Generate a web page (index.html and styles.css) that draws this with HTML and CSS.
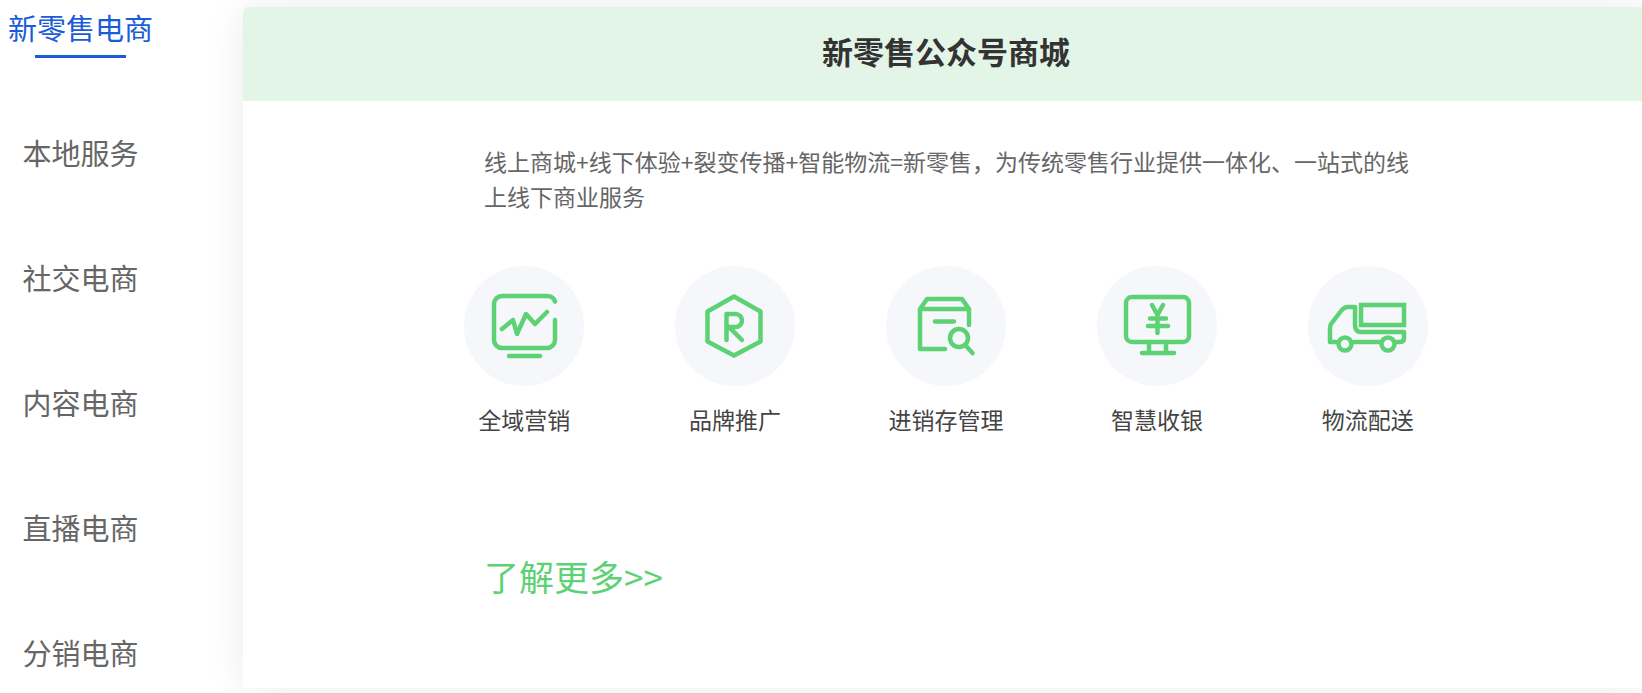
FILE: index.html
```html
<!doctype html>
<html lang="zh-CN">
<head>
<meta charset="utf-8">
<title>新零售电商</title>
  <link rel="stylesheet" href="styles.css">
</head>
<body>
  <div class="solution">
    <nav class="side-nav">
      <a class="side-link active" href="#">新零售电商</a>
      <a class="side-link" href="#">本地服务</a>
      <a class="side-link" href="#">社交电商</a>
      <a class="side-link" href="#">内容电商</a>
      <a class="side-link" href="#">直播电商</a>
      <a class="side-link" href="#">分销电商</a>
    </nav>
    <main class="panel">
      <h2 class="panel-title">新零售公众号商城</h2>
      <p class="desc">线上商城+线下体验+裂变传播+智能物流=新零售，为传统零售行业提供一体化、一站式的线上线下商业服务</p>
      <ul class="features">
        <li>
          <span class="icon">
            <svg viewBox="0 0 120 120">
              <path d="M91 35.500A8 8 0 0 0 83 30H38a8 8 0 0 0-8 8v36a8 8 0 0 0 8 8h45a8 8 0 0 0 8-8V54"/>
              <path d="M38 63l11-9 4 14 9-20 9 10 12-12M45 90h31"/>
            </svg>
          </span>
          <span>全域营销</span>
        </li>
        <li>
          <span class="icon">
            <svg viewBox="0 0 120 120">
              <path d="M59 30.500l26.500 15v30l-26.500 14-26.500-14v-30z"/>
              <path d="M51.500 74V48h9a6.500 6.500 0 0 1 0 13h-9M54 61l13 13"/>
            </svg>
          </span>
          <span>品牌推广</span>
        </li>
        <li>
          <span class="icon">
            <svg viewBox="0 0 120 120">
              <path d="M59 83H34V43l7-10h35l7 10v16M34 43h49M49 55.500h19"/>
              <circle cx="73" cy="72" r="9"/>
              <path d="M79.500 79.500l7 7.500"/>
            </svg>
          </span>
          <span>进销存管理</span>
        </li>
        <li>
          <span class="icon">
            <svg viewBox="0 0 120 120">
              <rect x="29" y="31" width="63" height="45" rx="6"/>
              <path d="M55 39l5.500 10L66 39M60.500 49v18M53 52.500h16M51 60h20M52 76v11M69 76v11M45 87h32"/>
            </svg>
          </span>
          <span>智慧收银</span>
        </li>
        <li>
          <span class="icon">
            <svg viewBox="0 0 120 120">
              <path class="sharp" d="M53 39h43v20H53z"/>
              <path d="M28 76h-6V62q0-2 1-4l10-13q3-4 7-4h7v18q0 7 6 7h43v6q0 4-4 4h-4M46 76h26"/>
              <circle cx="37" cy="78" r="6.500"/>
              <circle cx="80" cy="78" r="6.500"/>
            </svg>
          </span>
          <span>物流配送</span>
        </li>
      </ul>
      <a class="more" href="#">了解更多&gt;&gt;</a>
    </main>
  </div>
</body>
</html>
```

FILE: styles.css
```css
* {
  box-sizing: border-box;
}
body {
  margin: 0;
  min-height: 100vh;
  overflow: hidden;
  font-family: 'Noto Sans CJK SC', sans-serif;
  background: #fff;
}
a {
  text-decoration: none;
}
.solution {
  display: flex;
  align-items: flex-start;
  margin-right: -7px;
  padding-bottom: 5px;
}

/* 左侧菜单 */
.side-nav {
  display: flex;
  flex-direction: column;
  gap: 65px;
  width: 161px;
  margin-right: 82px;
}
.side-link {
  display: flex;
  flex-direction: column;
  align-items: center;
  height: 60px;
  font-size: 29px;
  line-height: 55px;
  color: #666;
  white-space: nowrap;
}
.side-link.active {
  color: #1a5cd8;
}
.side-link.active::after {
  content: '';
  width: 91px;
  height: 3px;
  background: #1a5cd8;
}

/* 右侧内容 */
.panel {
  flex: 1;
  margin-top: 7px;
  padding-bottom: 87px;
  border-radius: 5px 5px 0 0;
  background: #fff;
  box-shadow: 0 0 40px rgba(0, 0, 0, .08);
}
.panel-title {
  margin: 0;
  padding-bottom: 6px;
  border-radius: 5px 5px 0 0;
  font-size: 31px;
  line-height: 88px;
  text-align: center;
  color: #333;
  background: #e3f5e6;
}
.desc {
  width: 66%;
  margin: 43px auto 52px;
  padding-left: 2px;
  font-size: 23px;
  line-height: 35px;
  color: #666;
}
.features {
  display: grid;
  grid-template-columns: repeat(5, 1fr);
  width: 75%;
  margin: 0 auto;
  padding: 0;
  list-style: none;
}
.features li {
  display: flex;
  flex-direction: column;
  align-items: center;
  gap: 16px;
  font-size: 23px;
  line-height: 35px;
  color: #444;
}
.icon {
  width: 120px;
  height: 120px;
  border-radius: 50%;
  background: #f5f7fb;
}
.icon svg {
  display: block;
  fill: none;
  stroke: #5dd275;
  stroke-width: 4.500;
  stroke-linecap: round;
  stroke-linejoin: round;
}
.icon .sharp {
  stroke-linejoin: miter;
}
.more {
  display: block;
  width: 66%;
  margin: 114px auto 0;
  padding-left: 2px;
  font-size: 35px;
  line-height: 50px;
  color: #5dd275;
}
```
